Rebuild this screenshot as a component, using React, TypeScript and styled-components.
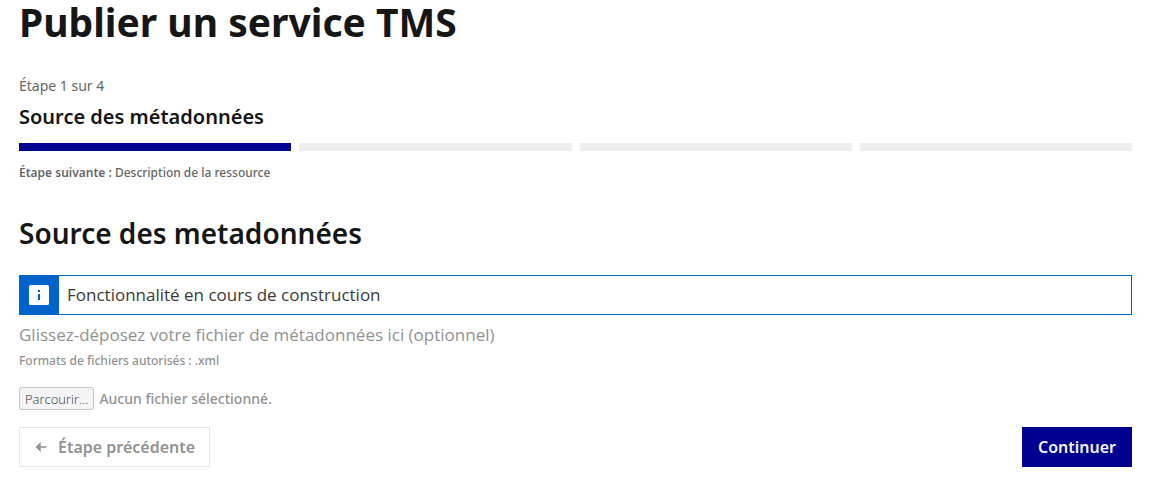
import React from "react";
import styled, { createGlobalStyle } from "styled-components";

const GlobalStyle = createGlobalStyle`
  *, *::before, *::after { box-sizing: border-box; }
  body {
    margin: 0;
    background: #fff;
    color: #3a3a3a;
    font-family: "Noto Sans", "Open Sans", sans-serif;
    font-size: 16px;
    font-weight: 500;
    line-height: 24px;
  }
  h1, h2, p { margin: 0; }
`;

const Page = styled.main`
  padding: 0 17px 16px 19px;
`;

const PageTitle = styled.h1`
  margin-bottom: 30px;
  color: #161616;
  font-size: 39px;
  font-weight: 700;
  line-height: 44px;
`;

const Stepper = styled.section`
  margin-bottom: 32px;
`;

const StepperTitle = styled.h2`
  display: flex;
  flex-direction: column;
  gap: 5px;
  margin-bottom: 12px;
  color: #161616;
  font-size: 20px;
  font-weight: 600;
  line-height: 28px;
`;

const StepperState = styled.span`
  color: #666;
  font-size: 14px;
  font-weight: 400;
  line-height: 24px;
`;

const Steps = styled.div`
  display: grid;
  grid-template-columns: repeat(4, 1fr);
  gap: 8px;
  margin-bottom: 12px;
`;

const Step = styled.span<{ $active?: boolean }>`
  height: 8px;
  background: ${(p) => (p.$active ? "#000091" : "#eee")};
`;

const StepperDetails = styled.p`
  color: #666;
  font-size: 12px;
  line-height: 20px;

  strong {
    font-weight: 600;
  }
`;

const SectionTitle = styled.h2`
  margin-bottom: 24px;
  color: #161616;
  font-size: 28px;
  font-weight: 600;
  line-height: 36px;
`;

const Alert = styled.div`
  display: flex;
  min-height: 40px;
  margin-bottom: 8px;
  border: 1px solid #0063cb;
`;

const AlertIcon = styled.span`
  display: flex;
  flex: 0 0 39px;
  align-items: center;
  justify-content: center;
  padding-right: 1px;
  background: #0063cb;
`;

const AlertText = styled.p`
  padding: 7px 8px;
  font-family: "Open Sans", sans-serif;
  font-size: 17px;
  font-weight: 400;
`;

const Upload = styled.div`
  margin-bottom: 16px;
  color: #929292;
`;

const UploadLabel = styled.label`
  display: block;
  font-family: "Open Sans", sans-serif;
  font-size: 17px;
  font-weight: 400;
`;

const UploadHint = styled.p`
  margin: 4px 0 16px;
  font-size: 12px;
  line-height: 20px;
`;

const FilePicker = styled.label`
  position: relative;
  display: flex;
  align-items: flex-start;
  gap: 5px;
  font-size: 14px;
`;

const FileInput = styled.input`
  position: absolute;
  inset: 0;
  width: 100%;
  opacity: 0;
`;

const BrowseLabel = styled.span`
  height: 23px;
  padding: 0 5px;
  border: 1px solid #c4c4c9;
  border-radius: 3px;
  background: #f4f4f7;
  color: #333;
  font-family: "Open Sans", sans-serif;
  font-size: 13px;
  font-weight: 300;
  line-height: 22px;
`;

const Actions = styled.div`
  display: flex;
  justify-content: space-between;
`;

const Button = styled.button<{ $secondary?: boolean }>`
  display: flex;
  align-items: center;
  gap: 8px;
  height: 40px;
  padding: 0 ${(p) => (p.$secondary ? "14px" : "16px")};
  border: ${(p) => (p.$secondary ? "1px solid #e5e5e5" : "0")};
  background: ${(p) => (p.$secondary ? "#fff" : "#000091")};
  color: ${(p) => (p.$secondary ? "#929292" : "#f5f5fe")};
  font-family: inherit;
  font-size: 16px;
  font-weight: 600;
  line-height: 24px;
`;

const InfoIcon = () => (
  <svg width="20" height="20" viewBox="0 0 20 20" aria-hidden="true">
    <rect width="20" height="20" rx="1.5" fill="#fff" />
    <path d="M9 5h2v2H9zM9 9h2v6H9z" fill="#0063cb" />
  </svg>
);

const ArrowLeftIcon = () => (
  <svg width="16" height="16" viewBox="0 0 16 16" fill="#929292" aria-hidden="true">
    <path d="M1.5 8l5.2-5v4.2h5.8v1.6H6.7V13z" />
  </svg>
);

export default function App() {
  return (
    <>
      <GlobalStyle />
      <Page>
        <PageTitle>Publier un service TMS</PageTitle>
        <Stepper>
          <StepperTitle>
            <StepperState>Étape 1 sur 4</StepperState>
            Source des métadonnées
          </StepperTitle>
          <Steps>
            <Step $active />
            <Step />
            <Step />
            <Step />
          </Steps>
          <StepperDetails>
            <strong>Étape suivante :</strong> Description de la ressource
          </StepperDetails>
        </Stepper>
        <SectionTitle>Source des metadonnées</SectionTitle>
        <Alert>
          <AlertIcon>
            <InfoIcon />
          </AlertIcon>
          <AlertText>Fonctionnalité en cours de construction</AlertText>
        </Alert>
        <Upload>
          <UploadLabel htmlFor="metadata-file">
            Glissez-déposez votre fichier de métadonnées ici (optionnel)
          </UploadLabel>
          <UploadHint id="metadata-hint">Formats de fichiers autorisés : .xml</UploadHint>
          <FilePicker>
            <FileInput
              id="metadata-file"
              type="file"
              accept=".xml"
              aria-describedby="metadata-hint"
              disabled
            />
            <BrowseLabel>Parcourir…</BrowseLabel>
            <span>Aucun fichier sélectionné.</span>
          </FilePicker>
        </Upload>
        <Actions>
          <Button type="button" $secondary disabled>
            <ArrowLeftIcon />
            Étape précédente
          </Button>
          <Button type="button">Continuer</Button>
        </Actions>
      </Page>
    </>
  );
}
